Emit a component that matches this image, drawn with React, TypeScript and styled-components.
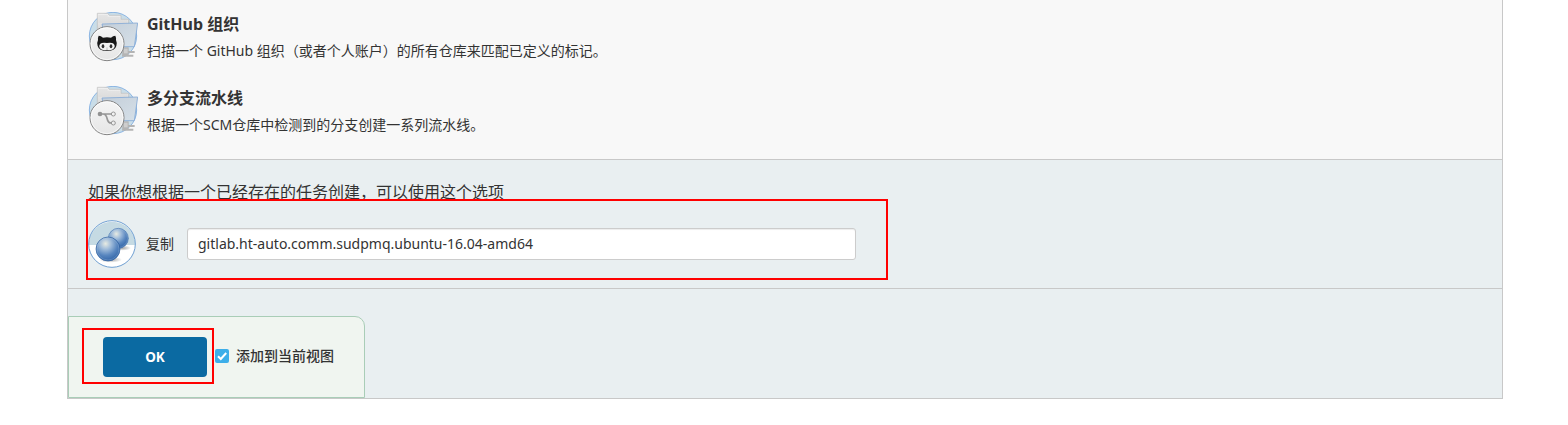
import React from 'react';
import styled, { createGlobalStyle } from 'styled-components';

const GlobalStyle = createGlobalStyle`
  * { box-sizing: border-box; }
  body {
    margin: 0;
    background: #fff;
    color: #333;
    font: 14px/20px "Noto Sans", "Noto Sans CJK SC", sans-serif;
    overflow: hidden;
  }
`;

const Page = styled.main`
  height: 425px;
  padding: 0 65px 0 67px;
`;

const Panel = styled.form`
  height: 399px;
  margin: 0;
  display: flex;
  flex-direction: column;
  border: 1px solid #c8c8c8;
  border-top: 0;
  background: #e9eff1;
`;

const Categories = styled.ul`
  list-style: none;
  margin: 0;
  padding: 12px 20px 0;
  height: 160px;
  background: #f8f8f8;
  border-bottom: 1px solid #c8c8c8;
`;

const Category = styled.li`
  display: flex;
  height: 74px;
  gap: 9px;
`;

const CategoryText = styled.div`
  display: flex;
  flex-direction: column;
  gap: 5px;
`;

const Title = styled.span`
  font-size: 16px;
  line-height: 24px;
  font-weight: 700;
`;

const Description = styled.span`
  line-height: 20px;
`;

const CopySection = styled.section`
  height: 129px;
  padding: 20px 20px 0;
  border-bottom: 1px solid #c8c8c8;
`;

const CopyHint = styled.p`
  margin: 0;
  font-size: 16px;
  line-height: 24px;
`;

const CopyRow = styled.div`
  position: relative;
  display: flex;
  align-items: center;
  height: 48px;
  margin-top: 16px;
`;

const CopyLabel = styled.label`
  width: 41px;
  margin-left: 10px;
`;

const CopyInput = styled.input`
  width: 669px;
  height: 32px;
  padding: 0 10px 1px;
  border: 1px solid #ccc;
  border-radius: 3px;
  box-shadow: inset 0 1px 1px rgba(0, 0, 0, 0.075);
  background: #fff;
  color: #333;
  font: inherit;
  outline: none;
`;

const Footer = styled.footer`
  display: flex;
  align-items: center;
  width: 297px;
  height: 82px;
  margin-top: 27px;
  padding-left: 34px;
  border: 1px solid #a9cdb7;
  border-radius: 0 10px 0 0;
  background: #f0f5f0;
`;

const OkWrap = styled.div`
  position: relative;
  display: flex;
`;

const OkButton = styled.button`
  width: 104px;
  height: 40px;
  padding: 0;
  border: 0;
  border-radius: 4px;
  background: #0b6aa2;
  color: #fff;
  font: inherit;
  font-size: 13.5px;
  font-weight: 700;
`;

const Highlight = styled.div<{ $inset: string }>`
  position: absolute;
  inset: ${(p) => p.$inset};
  border: 2px solid #f00;
  pointer-events: none;
`;

const ViewOption = styled.label`
  display: flex;
  align-items: center;
  gap: 7px;
  margin: -2px 0 0 8px;
  font-weight: 500;
`;

const CheckSvg = styled.svg`
  width: 14px;
  height: 14px;
`;

const CategorySvg = styled.svg`
  flex: none;
  width: 50px;
  height: 50px;
`;

const CopySvg = styled.svg`
  flex: none;
  width: 48px;
  height: 48px;
`;

const FolderIcon = ({ id, children }: { id: string; children: React.ReactNode }) => (
  <CategorySvg viewBox="24 21 150 150">
    <defs>
      <linearGradient id={`${id}-screen`} x1="0" y1="0" x2="1" y2="1">
        <stop offset="0" stopColor="#c3ced9" />
        <stop offset="1" stopColor="#d6e0e8" />
      </linearGradient>
      <linearGradient id={`${id}-badge`} x1="0" y1="0" x2="0" y2="1">
        <stop offset="0" stopColor="#f5f5f5" />
        <stop offset="1" stopColor="#e6e6e6" />
      </linearGradient>
      <linearGradient id={`${id}-paper`} x1="0" y1="0" x2="0" y2="1">
        <stop offset="0" stopColor="#f0f0f0" />
        <stop offset="1" stopColor="#cfcfcf" />
      </linearGradient>
    </defs>
    <circle cx="99" cy="93" r="71" fill="#c9dde8" stroke="#79aae0" strokeWidth="2.5" />
    <path d="M52 25H83L88 31H123V43H146V64L66 100H52Z" fill={`url(#${id}-paper)`} stroke="#bbb" strokeWidth="2" />
    <path d="M55 33H83M55 39H119M55 45H142M55 51H142" stroke="#d2d2d2" strokeWidth="2" />
    <path d="M128 127H146V138H164V144H146V149H160V155H126Z" fill="#b4b4b4" />
    <path d="M132 131H143V145H132Z" fill="#cecece" />
    <path d="M66 57L173 54L163 125H80Z" fill={`url(#${id}-screen)`} stroke="#83a8d5" strokeWidth="2.5" />
    <circle cx="81" cy="116" r="51" fill={`url(#${id}-badge)`} stroke="#858585" strokeWidth="3" />
    <circle cx="81" cy="116" r="48" fill="none" stroke="#fff" strokeWidth="2" />
    {children}
  </CategorySvg>
);

const OctocatIcon = () => (
  <FolderIcon id="github">
    <path
      d="M56 92Q63 92 69 98Q81 95 93 98Q99 92 106 92Q109 98 108 105Q112 113 109 123Q105 138 81 138Q57 138 53 123Q50 113 54 105Q53 98 56 92Z"
      fill="#181818"
    />
    <path
      d="M66 114Q71 112 81 114Q91 112 96 114Q105 117 104 125Q102 136 81 136Q60 136 58 125Q57 117 66 114Z"
      fill="#f4f4f4"
    />
    <ellipse cx="69" cy="124" rx="4" ry="6" fill="#303030" />
    <ellipse cx="93" cy="124" rx="4" ry="6" fill="#303030" />
    <path d="M80 128H82M78 132Q81 133 84 132" fill="none" stroke="#888" strokeWidth="1.5" />
  </FolderIcon>
);

const BranchIcon = () => (
  <FolderIcon id="branch">
    <path d="M60 105H94M69 105C89 107 74 132 94 132" fill="none" stroke="#979797" strokeWidth="5" />
    <circle cx="60" cy="105" r="7" fill="#929292" />
    <circle cx="100" cy="105" r="6" fill="#f1f1f1" stroke="#979797" strokeWidth="3" />
    <circle cx="100" cy="132" r="6" fill="#eee" stroke="#979797" strokeWidth="3" />
  </FolderIcon>
);

const CopyIcon = () => (
  <CopySvg viewBox="24 120 144 144">
    <defs>
      <radialGradient id="ball" cx="0.4" cy="0.28" r="0.75">
        <stop offset="0" stopColor="#e8ebe2" />
        <stop offset="0.3" stopColor="#a3bedb" />
        <stop offset="0.65" stopColor="#5886bf" />
        <stop offset="1" stopColor="#2f62a6" />
      </radialGradient>
      <radialGradient id="ball-shadow">
        <stop offset="0" stopColor="#555" stopOpacity="0.55" />
        <stop offset="1" stopColor="#555" stopOpacity="0" />
      </radialGradient>
    </defs>
    <circle cx="96" cy="192" r="70" fill="#fff" />
    <path d="M26 195A70 70 0 1 1 166 195Z" fill="#c5dae3" />
    <circle cx="96" cy="192" r="70" fill="none" stroke="#6f9fd2" strokeWidth="3" />
    <ellipse cx="127" cy="204" rx="26" ry="8" fill="url(#ball-shadow)" />
    <circle cx="115" cy="175" r="30" fill="url(#ball)" stroke="#4a78b3" strokeWidth="2" />
    <circle cx="115" cy="175" r="27.5" fill="none" stroke="#b7cfe5" strokeWidth="1.5" opacity="0.5" />
    <ellipse cx="92" cy="239" rx="34" ry="9" fill="url(#ball-shadow)" />
    <circle cx="84" cy="207" r="36" fill="url(#ball)" stroke="#2f5f9f" strokeWidth="2" />
    <circle cx="84" cy="207" r="33" fill="none" stroke="#b7cfe5" strokeWidth="1.5" opacity="0.5" />
  </CopySvg>
);

const categories = [
  { title: 'GitHub 组织', text: '扫描一个 GitHub 组织（或者个人账户）的所有仓库来匹配已定义的标记。', icon: <OctocatIcon /> },
  { title: '多分支流水线', text: '根据一个SCM仓库中检测到的分支创建一系列流水线。', icon: <BranchIcon /> },
];

export default function App() {
  return (
    <>
      <GlobalStyle />
      <Page>
        <Panel>
          <Categories>
            {categories.map((c) => (
              <Category key={c.title}>
                {c.icon}
                <CategoryText>
                  <Title>{c.title}</Title>
                  <Description>{c.text}</Description>
                </CategoryText>
              </Category>
            ))}
          </Categories>
          <CopySection>
            <CopyHint>如果你想根据一个已经存在的任务创建，可以使用这个选项</CopyHint>
            <CopyRow>
              <CopyIcon />
              <CopyLabel htmlFor="from">复制</CopyLabel>
              <CopyInput id="from" defaultValue="gitlab.ht-auto.comm.sudpmq.ubuntu-16.04-amd64" />
              <Highlight $inset="-21px 594px -12px -2px" />
            </CopyRow>
          </CopySection>
          <Footer>
            <OkWrap>
              <OkButton type="button">OK</OkButton>
              <Highlight $inset="-9px -7px -7px -21px" />
            </OkWrap>
            <ViewOption>
              <CheckSvg viewBox="0 0 14 14">
                <rect width="14" height="14" rx="2" fill="#3daee9" />
                <path d="M3 7.2L5.8 10L11.2 4" fill="none" stroke="#fff" strokeWidth="2" />
              </CheckSvg>
              添加到当前视图
            </ViewOption>
          </Footer>
        </Panel>
      </Page>
    </>
  );
}
